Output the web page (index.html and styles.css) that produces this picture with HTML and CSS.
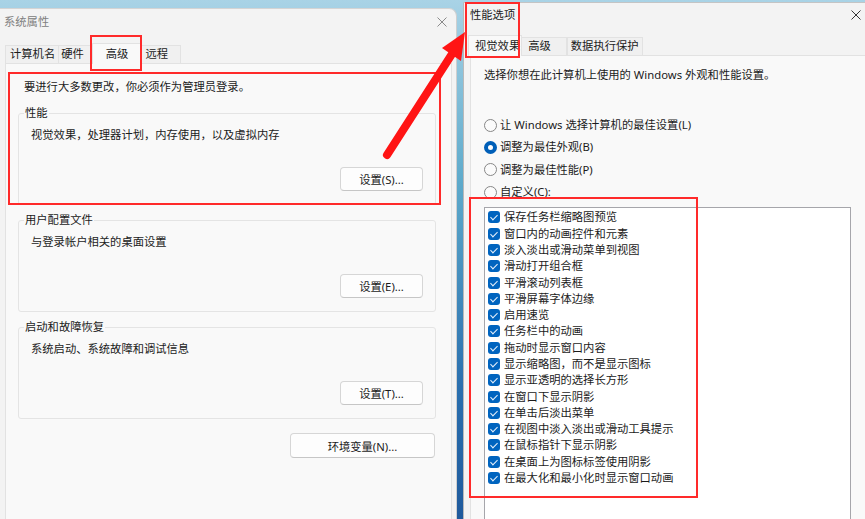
FILE: index.html
```html
<!DOCTYPE html>
<html lang="zh-CN">
  <head>
    <meta charset="UTF-8" />
    <title>系统属性</title>
    <link rel="stylesheet" href="styles.css">
  </head>
  <body>
    <div class="win win-left">
      <div class="titlebar">
        <span class="title dim">系统属性</span>
        <svg class="close" width="10" height="10" viewBox="0 0 10 10"><path d="M0.5 0.5L9.5 9.5M9.5 0.5L0.5 9.5" stroke="#8a8a8a" stroke-width="1"/></svg>
      </div>
      <div class="tabs tabs-left">
        <div class="tab">计算机名</div>
        <div class="tab">硬件</div>
        <div class="tab active">高级</div>
        <div class="tab">远程</div>
      </div>
      <div class="panel panel-left">
        <p class="notice">要进行大多数更改，你必须作为管理员登录。</p>

        <fieldset class="group">
          <legend>性能</legend>
          <p class="desc">视觉效果，处理器计划，内存使用，以及虚拟内存</p>
          <div class="btn-row"><button class="btn">设置(S)...</button></div>
        </fieldset>

        <fieldset class="group">
          <legend>用户配置文件</legend>
          <p class="desc">与登录帐户相关的桌面设置</p>
          <div class="btn-row"><button class="btn">设置(E)...</button></div>
        </fieldset>

        <fieldset class="group">
          <legend>启动和故障恢复</legend>
          <p class="desc">系统启动、系统故障和调试信息</p>
          <div class="btn-row"><button class="btn">设置(T)...</button></div>
        </fieldset>

        <div class="btn-row env-row"><button class="btn btn-env">环境变量(N)...</button></div>
      </div>
    </div>

    <div class="win win-right">
      <div class="titlebar">
        <span class="title">性能选项</span>
        <svg class="close" width="10" height="10" viewBox="0 0 10 10"><path d="M0.5 0.5L9.5 9.5M9.5 0.5L0.5 9.5" stroke="#333" stroke-width="1"/></svg>
      </div>
      <div class="tabs tabs-right">
        <div class="tab active">视觉效果</div>
        <div class="tab">高级</div>
        <div class="tab">数据执行保护</div>
      </div>
      <div class="panel panel-right">
        <p class="intro">选择你想在此计算机上使用的 Windows 外观和性能设置。</p>

        <div class="radios">
          <div class="radio-row"><span class="radio"></span>让 Windows 选择计算机的最佳设置(L)</div>
          <div class="radio-row"><span class="radio on"></span>调整为最佳外观(B)</div>
          <div class="radio-row"><span class="radio"></span>调整为最佳性能(P)</div>
          <div class="radio-row"><span class="radio"></span>自定义(C):</div>
        </div>

        <div class="list">
          <div class="item"><span class="check"></span>保存任务栏缩略图预览</div>
          <div class="item"><span class="check"></span>窗口内的动画控件和元素</div>
          <div class="item"><span class="check"></span>淡入淡出或滑动菜单到视图</div>
          <div class="item"><span class="check"></span>滑动打开组合框</div>
          <div class="item"><span class="check"></span>平滑滚动列表框</div>
          <div class="item"><span class="check"></span>平滑屏幕字体边缘</div>
          <div class="item"><span class="check"></span>启用速览</div>
          <div class="item"><span class="check"></span>任务栏中的动画</div>
          <div class="item"><span class="check"></span>拖动时显示窗口内容</div>
          <div class="item"><span class="check"></span>显示缩略图，而不是显示图标</div>
          <div class="item"><span class="check"></span>显示亚透明的选择长方形</div>
          <div class="item"><span class="check"></span>在窗口下显示阴影</div>
          <div class="item"><span class="check"></span>在单击后淡出菜单</div>
          <div class="item"><span class="check"></span>在视图中淡入淡出或滑动工具提示</div>
          <div class="item"><span class="check"></span>在鼠标指针下显示阴影</div>
          <div class="item"><span class="check"></span>在桌面上为图标标签使用阴影</div>
          <div class="item"><span class="check"></span>在最大化和最小化时显示窗口动画</div>
        </div>
      </div>
    </div>

    <!-- annotations drawn over the screenshot -->
    <div class="mark mark-tab"></div>
    <div class="mark mark-perf"></div>
    <div class="mark mark-title"></div>
    <div class="mark mark-list"></div>
    <svg class="arrow" width="865" height="519" viewBox="0 0 865 519">
      <line x1="387" y1="155" x2="452" y2="54" stroke="#ff1414" stroke-width="8" stroke-linecap="round"/>
      <polygon points="465,32 461,61 442,48" fill="#ff1414"/>
    </svg>
  </body>
</html>
```

FILE: styles.css
```css
body {
  margin: 0;
  width: 865px;
  height: 519px;
  overflow: hidden;
  position: relative;
  display: flex;
  gap: 6px;
  align-items: flex-start;
  font-family: "Noto Sans", "Noto Sans CJK SC", sans-serif;
  font-size: 11.3px;
  line-height: 16px;
  color: #1b1b1b;
  background: linear-gradient(#a9d3e6 0%, #5eaacb 35%, #2a6fae 75%, #1f5a9c 100%);
}
p {
  margin: 0;
}
.win {
  box-sizing: border-box;
  background: #f3f3f3;
  display: flex;
  flex-direction: column;
  flex: none;
  overflow: hidden;
}
.win-left {
  width: 457px;
  height: 511px;
  margin-top: 8px;
  border-top: 1px solid #d4d4d4;
  border-right: 1px solid #cfcfcf;
  border-top-right-radius: 8px;
  padding: 0 4px 0 5px;
}
.win-right {
  width: 404px;
  height: 517px;
  margin-top: 2px;
  border-top: 1px solid #c4c4c4;
  border-left: 1px solid #b9b9b9;
  padding: 0 0 0 6px;
}
.titlebar {
  flex: none;
  display: flex;
  align-items: center;
  justify-content: space-between;
}
.win-left .titlebar {
  height: 26px;
  padding-right: 5px;
  margin-left: -1px;
}
.win-right .titlebar {
  height: 24px;
  padding-right: 6px;
}
.title.dim {
  color: #808080;
}
.tabs {
  flex: none;
  display: flex;
  align-items: flex-end;
  position: relative;
  z-index: 1;
}
.tabs-left {
  margin-top: 8px;
  height: 20px;
}
.tabs-right {
  margin-top: 8px;
  height: 20px;
  margin-left: -2px;
}
.tab {
  box-sizing: border-box;
  height: 18px;
  line-height: 16px;
  border: 1px solid #e2e2e2;
  border-bottom: none;
  background: #f0f0f0;
  white-space: nowrap;
}
.tab.active {
  height: 21px;
  margin-bottom: -1px;
  background: #f9f9f9;
  line-height: 19px;
}
.tabs-left .tab:nth-child(1) { padding: 0 3px 0 4px; }
.tabs-left .tab:nth-child(2) { padding: 0 7px 0 2px; border-left: none; }
.tabs-left .tab:nth-child(3) { padding: 0 13px 0 13px; }
.tabs-left .tab:nth-child(4) { padding: 0 12px 0 3px; border-left: none; }
.tabs-right .tab:nth-child(1) { padding: 0 1px 0 6px; }
.tabs-right .tab:nth-child(2) { padding: 0 15px 0 6px; border-left: none; }
.tabs-right .tab:nth-child(3) { padding: 0 3px 0 3px; }
.panel {
  flex: 1;
  min-height: 0;
  overflow: hidden;
  background: #f9f9f9;
  border: 1px solid #e2e2e2;
  border-bottom: none;
}
.panel-left {
  padding-top: 15px;
}
.notice {
  padding-left: 18px;
}
.group {
  margin: 10px 15px 0 12px;
  padding: 6px 12px 13px 12px;
  border: 1px solid #e4e4e4;
  border-radius: 3px;
  min-width: 0;
}
.group + .group {
  margin-top: 7px;
}
.group legend {
  margin-left: -7px;
  padding: 0 1px;
  line-height: 16px;
}
.btn-row {
  display: flex;
  justify-content: flex-end;
  margin-top: 24px;
}
.btn {
  box-sizing: border-box;
  width: 83px;
  height: 24px;
  padding: 0;
  font-family: inherit;
  font-size: 11.3px;
  color: #1b1b1b;
  background: #fdfdfd;
  border: 1px solid #d6d6d6;
  border-bottom-color: #c6c6c6;
  border-radius: 4px;
}
.env-row {
  margin: 14px 16px 0 0;
}
.btn-env {
  width: 145px;
  height: 25px;
}
.panel-right {
  padding: 11px 0 0 13px;
}
.radios {
  margin-top: 31px;
}
.radio-row {
  height: 22.3px;
  display: flex;
  align-items: center;
  gap: 3px;
}
.radio {
  box-sizing: border-box;
  width: 13px;
  height: 13px;
  border: 1px solid #878787;
  border-radius: 50%;
  background: #fbfbfb;
}
.radio.on {
  border: 4px solid #005fb8;
  background: #fff;
}
.list {
  box-sizing: border-box;
  width: 367px;
  height: 320px;
  margin-top: 4px;
  padding: 1px 0 0 3px;
  background: #fff;
  border: 1px solid #a6a6ab;
}
.item {
  height: 16.3px;
  display: flex;
  align-items: center;
  gap: 4px;
  white-space: nowrap;
}
.check {
  position: relative;
  width: 12px;
  height: 12px;
  border-radius: 3px;
  background: #0064bf;
  flex: none;
}
.check::after {
  content: "";
  position: absolute;
  left: 4px;
  top: 2px;
  width: 3px;
  height: 6px;
  border: solid #e8f1fb;
  border-width: 0 1px 1px 0;
  transform: rotate(45deg);
}
.mark {
  position: absolute;
  border: 2px solid #ff2a2a;
  box-sizing: border-box;
  pointer-events: none;
  z-index: 5;
}
.mark-tab { left: 90px; top: 35px; width: 52px; height: 36px; }
.mark-perf { left: 8px; top: 72px; width: 433px; height: 133px; }
.mark-title { left: 465px; top: 2px; width: 55px; height: 56px; }
.mark-list { left: 469px; top: 197px; width: 229px; height: 301px; }
.arrow {
  position: absolute;
  left: 0;
  top: 0;
  pointer-events: none;
  z-index: 6;
}
```
